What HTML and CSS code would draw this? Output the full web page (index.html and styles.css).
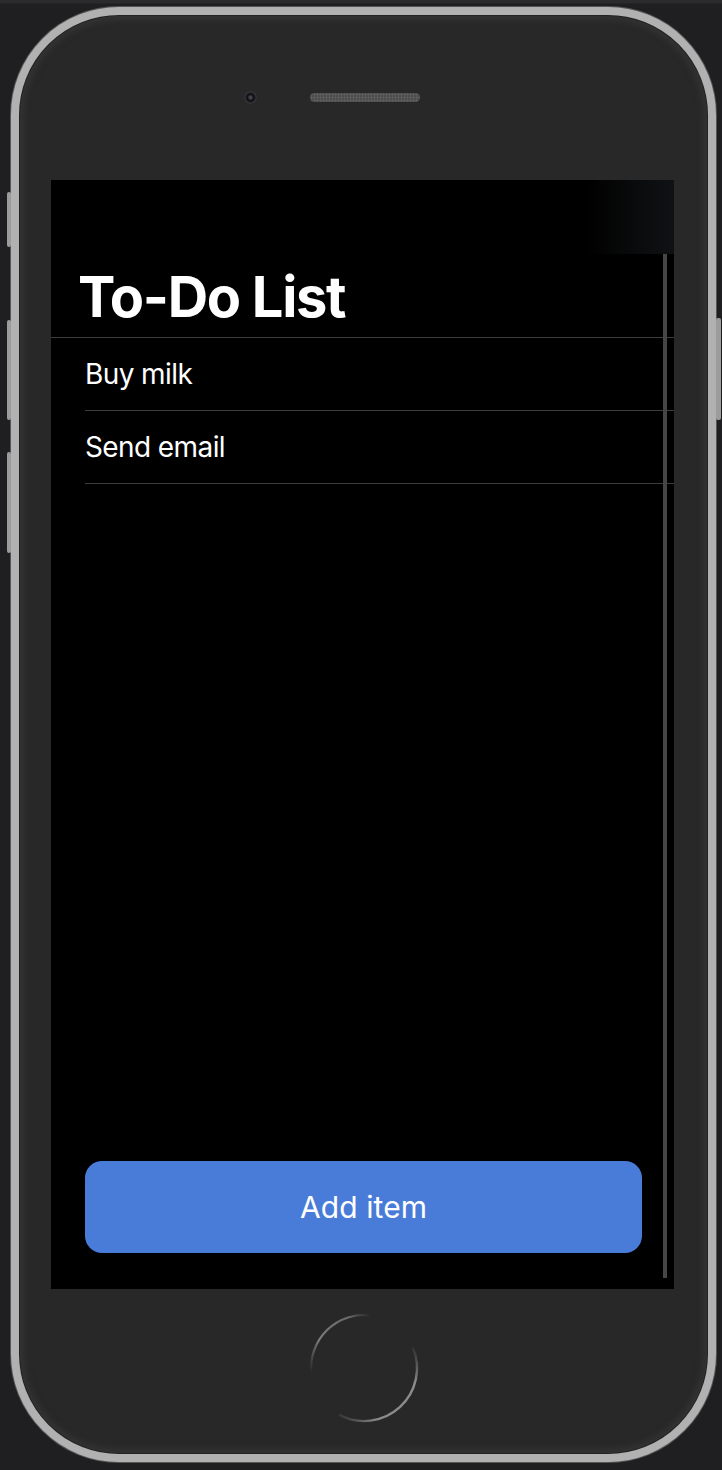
FILE: index.html
```html
<!DOCTYPE html>
<html lang="en">
<head>
<meta charset="utf-8">
<title>To-Do List</title>
<link rel="stylesheet" href="styles.css">
</head>
<body>
<div class="stage">
  <div class="phone">
    <span class="side-btn side-btn-mute"></span>
    <span class="side-btn side-btn-vol-up"></span>
    <span class="side-btn side-btn-vol-down"></span>
    <span class="side-btn side-btn-power"></span>

    <div class="bezel-top">
      <span class="camera"></span>
      <span class="speaker"></span>
    </div>

    <div class="screen">
      <div class="statusbar"></div>
      <div class="content">
        <h1 class="title">To-Do List</h1>
        <ul class="list">
          <li class="row">Buy milk</li>
          <li class="row">Send email</li>
        </ul>
        <div class="spacer"></div>
        <button class="add-btn">Add item</button>
        <span class="scrollbar"></span>
      </div>
    </div>

    <div class="bezel-bottom">
      <svg class="home" width="120" height="120" viewBox="0 0 120 120">
        <defs>
          <linearGradient id="g1" x1="0" y1="1" x2="1" y2="0">
            <stop offset="0" stop-color="#777" stop-opacity="0"/>
            <stop offset="0.35" stop-color="#7a7a7a"/>
            <stop offset="0.8" stop-color="#6a6a6a"/>
            <stop offset="1" stop-color="#666" stop-opacity="0"/>
          </linearGradient>
          <linearGradient id="g2" x1="1" y1="0" x2="0" y2="1">
            <stop offset="0" stop-color="#888" stop-opacity="0"/>
            <stop offset="0.25" stop-color="#8c8c8c"/>
            <stop offset="0.75" stop-color="#8a8a8a"/>
            <stop offset="1" stop-color="#888" stop-opacity="0"/>
          </linearGradient>
        </defs>
        <path d="M7.3 64.6 A53 53 0 0 1 66 7.3" fill="none" stroke="url(#g1)" stroke-width="2.2"/>
        <path d="M108.8 39.3 A53 53 0 0 1 35 106.8" fill="none" stroke="url(#g2)" stroke-width="2.4"/>
      </svg>
    </div>
  </div>
</div>
</body>
</html>
```

FILE: styles.css
```css
* { box-sizing: border-box; }

html, body {
  margin: 0;
  padding: 0;
}

body {
  width: 722px;
  height: 1470px;
  overflow: hidden;
  background: linear-gradient(180deg, #2b2b2d 0, #2b2b2d 3px, #1f1f21 4px, #1f1f21 100%);
  font-family: "Inter", "Liberation Sans", sans-serif;
}

.stage {
  padding: 7px 0 0 11px;
}

.phone {
  position: relative;
  width: 705px;
  height: 1455px;
  border: 8px solid #b1b1b1;
  border-radius: 108px;
  background: #282828;
  box-shadow:
    0 0 0 1px #555,
    inset 0 0 0 1px #222,
    inset 0 0 6px 5px #333;
  display: flex;
  flex-direction: column;
}

.side-btn {
  position: absolute;
  background: #9c9c9c;
  border-radius: 2px;
}
.side-btn-mute { left: -12px; top: 177px; width: 4px; height: 55px; }
.side-btn-vol-up { left: -12px; top: 305px; width: 4px; height: 100px; }
.side-btn-vol-down { left: -12px; top: 437px; width: 4px; height: 101px; }
.side-btn-power { right: -13px; top: 303px; width: 5px; height: 102px; }

.bezel-top {
  height: 165px;
  display: flex;
  align-items: center;
  padding-left: 225px;
  gap: 53px;
}

.camera {
  width: 13px;
  height: 13px;
  border-radius: 50%;
  background: radial-gradient(circle at 50% 50%, #4a4a52 0, #3c3c44 1.6px, #121216 2.8px, #18181d 4.5px, #3a3a3f 5.6px, #2a2a2e 6.5px);
}

.speaker {
  width: 110px;
  height: 9px;
  border-radius: 5px;
  background-color: #4e4e4e;
  background-image: radial-gradient(circle, #666 0.8px, transparent 1.1px);
  background-size: 3px 3px;
}

.screen {
  margin-left: 32px;
  width: 623px;
  height: 1109px;
  background: #000;
  display: flex;
  flex-direction: column;
}

.statusbar {
  height: 74px;
  flex: none;
  background: linear-gradient(90deg, #000 0, #000 86%, #0a0b0c 94%, #101114 100%);
}

.content {
  position: relative;
  flex: 1;
  display: flex;
  flex-direction: column;
}

.title {
  margin: 0;
  height: 84px;
  padding: 15px 0 0 27px;
  font-size: 56px;
  line-height: 56px;
  font-weight: 700;
  color: #fff;
  letter-spacing: -1.3px;
  border-bottom: 1px solid #3c3c3e;
}

.list {
  list-style: none;
  margin: 0;
  padding: 0 0 0 34px;
}

.row {
  height: 73px;
  padding-top: 22px;
  font-size: 28px;
  line-height: 28px;
  color: #fff;
  letter-spacing: -0.6px;
  border-bottom: 1px solid #3c3c3e;
}

.spacer { flex: 1; }

.add-btn {
  margin: 0 32px 36px 34px;
  height: 92px;
  border: none;
  border-radius: 17px;
  background: #497cd8;
  color: #fff;
  font-family: "Inter", "Liberation Sans", sans-serif;
  font-size: 30px;
  font-weight: 400;
  letter-spacing: 0.1px;
  padding: 0;
}

.scrollbar {
  position: absolute;
  right: 7px;
  top: 0;
  bottom: 11px;
  width: 4px;
  background: #464646;
}

.bezel-bottom {
  flex: 1;
  display: flex;
  align-items: center;
  justify-content: center;
  padding-bottom: 7px;
}
```
